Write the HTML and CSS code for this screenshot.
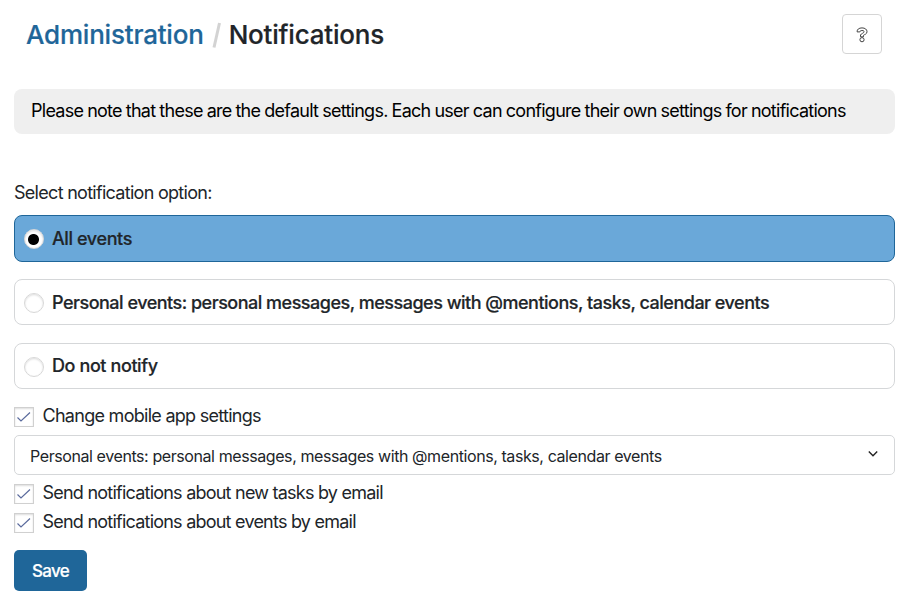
FILE: index.html
```
<!DOCTYPE html>
<html lang="en">
<head>
<meta charset="utf-8">
<title>Notifications</title>
<link rel="stylesheet" href="styles.css">
</head>
<body>
<header class="top">
<h1 class="crumbs"><a class="link"><span>Administration</span></a><svg class="slash" width="10" height="28" viewBox="0 0 10 28"><path d="M2 26.5L7.5 2" stroke="#d3d3d3" stroke-width="3"/></svg><span>Notifications</span></h1>
<button class="help" aria-label="Help"><svg width="14" height="18" viewBox="0 0 14 18" fill="none" stroke="#444" stroke-width="1"><path d="M2.1 5.9C1.9 3.3 4 1.9 7 1.9S12 3.4 12 5.7C12 8.3 9.4 8.4 8.5 9.3V10.8H5.5V9C6.1 7.4 9.1 7.2 9.1 5.7C9.1 4 5 4.1 4.9 5.9Z"/><circle cx="7" cy="13.7" r="2.1"/></svg></button>
</header>
<div class="note"><span>Please note that these are the default settings. Each user can configure their own settings for notifications</span></div>
<main>
<p class="label"><span>Select notification option:</span></p>
<div class="option selected"><i class="radio"></i><span>All events</span></div>
<div class="option long"><i class="radio"></i><span>Personal events: personal messages, messages with @mentions, tasks, calendar events</span></div>
<div class="option"><i class="radio"></i><span>Do not notify</span></div>
<div class="check c1"><svg class="box" viewBox="0 0 18 18"><path d="M2.5 9.5L6 13L15 4.5"/></svg><span>Change mobile app settings</span></div>
<div class="select"><span>Personal events: personal messages, messages with @mentions, tasks, calendar events</span><svg class="chev" width="12" height="8" viewBox="0 0 12 8"><path d="M1.8 1.5L6 5.7L10.2 1.5"/></svg></div>
<div class="check"><svg class="box" viewBox="0 0 18 18"><path d="M2.5 9.5L6 13L15 4.5"/></svg><span>Send notifications about new tasks by email</span></div>
<div class="check"><svg class="box" viewBox="0 0 18 18"><path d="M2.5 9.5L6 13L15 4.5"/></svg><span>Send notifications about events by email</span></div>
<button class="save"><span>Save</span></button>
</main>
</body>
</html>
```
FILE: styles.css
```
* { box-sizing: border-box; }
body { margin: 0; padding: 14px 12px 0 14px; background: #fff; color: #212529; font: 18px/24px Inter, sans-serif; letter-spacing: -0.5px; }
button { font: inherit; letter-spacing: inherit; padding: 0; }
svg { flex: none; }
span { white-space: nowrap; }
.top { display: flex; justify-content: space-between; height: 75px; padding: 0 13px 0 12px; }
.crumbs { display: flex; align-items: center; height: 42px; margin: 0; font-size: 26px; font-weight: 500; letter-spacing: -0.2px; -webkit-text-stroke: 0.2px currentColor; }
.link { color: #1f6699; }
.slash { margin: 0 7px 0 8px; }
.help { display: flex; align-items: center; justify-content: center; width: 40px; height: 40px; padding-top: 2px; border: 1px solid #d5d5d5; border-radius: 4px; background: #fff; }
.note { height: 45px; padding-left: 17px; border-radius: 8px; background: #efefef; color: #000; line-height: 44px; letter-spacing: -0.74px; word-spacing: -0.35px; }
.label { margin: 47px 0 10px; letter-spacing: -0.71px; }
.option { display: flex; align-items: center; height: 46px; margin-bottom: 18px; padding-left: 9px; border: 1px solid #d5d7d9; border-radius: 8px; font-weight: 500; letter-spacing: -0.4px; -webkit-text-stroke: 0.2px currentColor; }
.long { letter-spacing: -0.5px; }
.long span { padding-top: 1px; }
.selected { height: 47px; margin-bottom: 17px; border-color: #1f6699; background: #6aa8d9; }
.radio { width: 20px; height: 20px; margin: 2px 8px 0 0; border: 1px solid #d8d8d8; border-radius: 50%; background: #fff; box-shadow: inset 0 1px 2px #ddd; }
.selected .radio { margin-top: 1px; background: radial-gradient(circle at 8.5px 9.5px, #000 5px, #fff 6px); }
.check { display: flex; align-items: center; height: 29px; letter-spacing: -0.77px; }
.check span { padding-left: 0.5px; }
.c1 { height: 31px; margin-top: -7px; margin-bottom: 4px; letter-spacing: -0.72px; }
.box { width: 20px; height: 20px; margin: 2px 8px 0 0; border: 1px solid #d0d0d0; fill: none; stroke: #5b6b9d; stroke-width: 1.2; box-shadow: inset 0 1px 2px #ddd; }
.select { display: flex; align-items: center; justify-content: space-between; height: 40px; margin: 0 0 3px; padding: 0 15px; border: 1px solid #d5d7d9; border-radius: 5px; font-size: 16px; letter-spacing: -0.415px; }
.select span { padding-top: 2px; }
.chev { margin-top: -2px; fill: none; stroke: #222; stroke-width: 1.4; }
.save { width: 73px; height: 41px; margin-top: 14px; padding-top: 1px; border: 0; border-radius: 5px; background: #1f6699; color: #fff; font-weight: 500; font-size: 17px; letter-spacing: -0.75px; -webkit-text-stroke: 0.2px currentColor; }
```
